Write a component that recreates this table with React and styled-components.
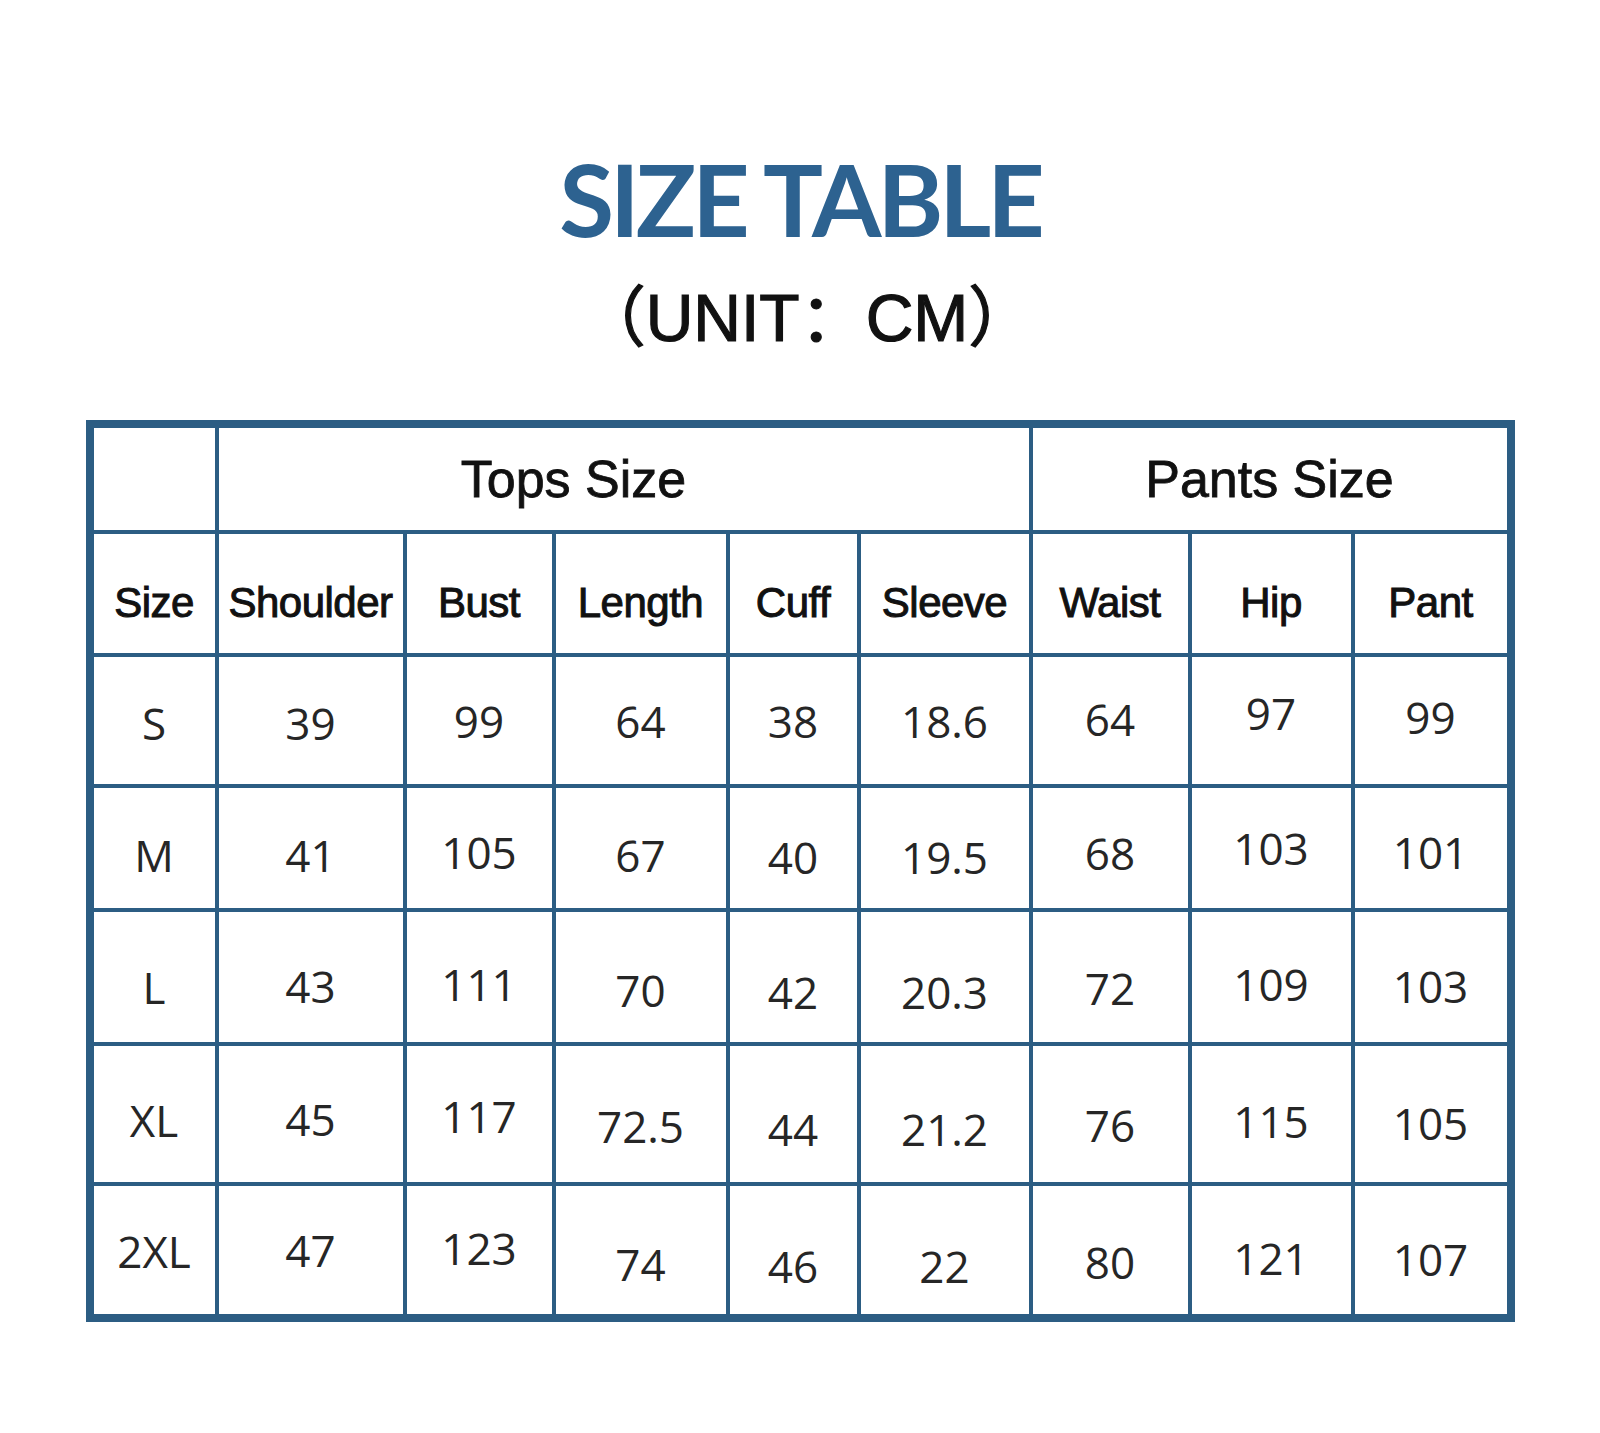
import React from "react";
import styled, { createGlobalStyle } from "styled-components";

const GlobalStyle = createGlobalStyle`
    html, body {
        margin: 0;
        padding: 0;
        background: #ffffff;
    }
    body {
        font-family: "Liberation Sans", Arial, sans-serif;
    }
`;

const BLUE = "#2c5d83";

const columns = [121, 184, 145, 170, 127, 168, 155, 159, 152];
const rowHeights = [102, 119, 127, 120, 130, 136, 128];

const headers = ["Size", "Shoulder", "Bust", "Length", "Cuff", "Sleeve", "Waist", "Hip", "Pant"];

// each value: [text, vertical shift from the row centre]
const rows = [
    [["S", 2], ["39", 2], ["99", 0], ["64", 0], ["38", 0], ["18.6", 0], ["64", -2], ["97", -8], ["99", -4]],
    [["M", 7], ["41", 7], ["105", 4], ["67", 7], ["40", 9], ["19.5", 9], ["68", 5], ["103", 0], ["101", 4]],
    [["L", 10], ["43", 9], ["111", 7], ["70", 13], ["42", 15], ["20.3", 15], ["72", 11], ["109", 7], ["103", 9]],
    [["XL", 6], ["45", 5], ["117", 2], ["72.5", 12], ["44", 15], ["21.2", 15], ["76", 11], ["115", 7], ["105", 9]],
    [["2XL", 1], ["47", 0], ["123", -2], ["74", 14], ["46", 16], ["22", 16], ["80", 12], ["121", 8], ["107", 9]],
];

function App() {
    return (
        <>
            <GlobalStyle />
            <Page>
                <Heading>
                    <Title>SIZE TABLE</Title>
                    <Unit>（UNIT：CM）</Unit>
                </Heading>
                <Table>
                    <Cell />
                    <GroupCell span={5} $padRight={100}>Tops Size</GroupCell>
                    <GroupCell span={3}>Pants Size</GroupCell>
                    {headers.map((h) => (
                        <HeadCell key={h}>{h}</HeadCell>
                    ))}
                    {rows.map((row, i) =>
                        row.map(([value, shift], j) => (
                            <Cell key={`${i}-${j}`}>
                                <Value $shift={shift}>{value}</Value>
                            </Cell>
                        ))
                    )}
                </Table>
            </Page>
        </>
    );
}

const Page = styled.main`
    width: 1430px;
    margin: 0 auto;
    padding-top: 138px;
    padding-bottom: 130px;
    display: flex;
    flex-direction: column;
    align-items: center;
`;

const Heading = styled.header`
    display: flex;
    flex-direction: column;
    align-items: center;
    margin-bottom: 62px;
`;

const Title = styled.h1`
    margin: 0;
    font-family: Lato, "Open Sans", sans-serif;
    font-weight: 700;
    font-size: 100px;
    line-height: 120px;
    letter-spacing: -4px;
    color: #2d6290;
`;

const Unit = styled.div`
    margin-top: 20px;
    padding-left: 14px;
    font-family: "Liberation Sans", "Noto Sans CJK SC", sans-serif;
    font-size: 66px;
    line-height: 80px;
    color: #111111;
    -webkit-text-stroke: 1.2px #111111;
`;

const Table = styled.section`
    display: grid;
    grid-template-columns: ${columns.map((c) => `${c}px`).join(" ")};
    grid-template-rows: ${rowHeights.map((r) => `${r}px`).join(" ")};
    gap: 4px;
    padding: 8px;
    background: ${BLUE};
`;

const Cell = styled.div`
    background: #ffffff;
    display: flex;
    align-items: center;
    justify-content: center;
    color: #222222;
`;

const GroupCell = styled(Cell)`
    grid-column: span ${(p) => p.span};
    padding-right: ${(p) => p.$padRight || 0}px;
    font-size: 52px;
    color: #111111;
    -webkit-text-stroke: 0.8px #111111;
`;

const HeadCell = styled(Cell)`
    padding-top: 18px;
    font-size: 42px;
    letter-spacing: -0.5px;
    color: #111111;
    -webkit-text-stroke: 1px #111111;
`;

const Value = styled.span`
    font-family: "Open Sans", "Noto Sans", sans-serif;
    font-size: 44px;
    line-height: 1;
    color: #262626;
    transform: translateY(${(p) => p.$shift}px);
`;

export default App;
